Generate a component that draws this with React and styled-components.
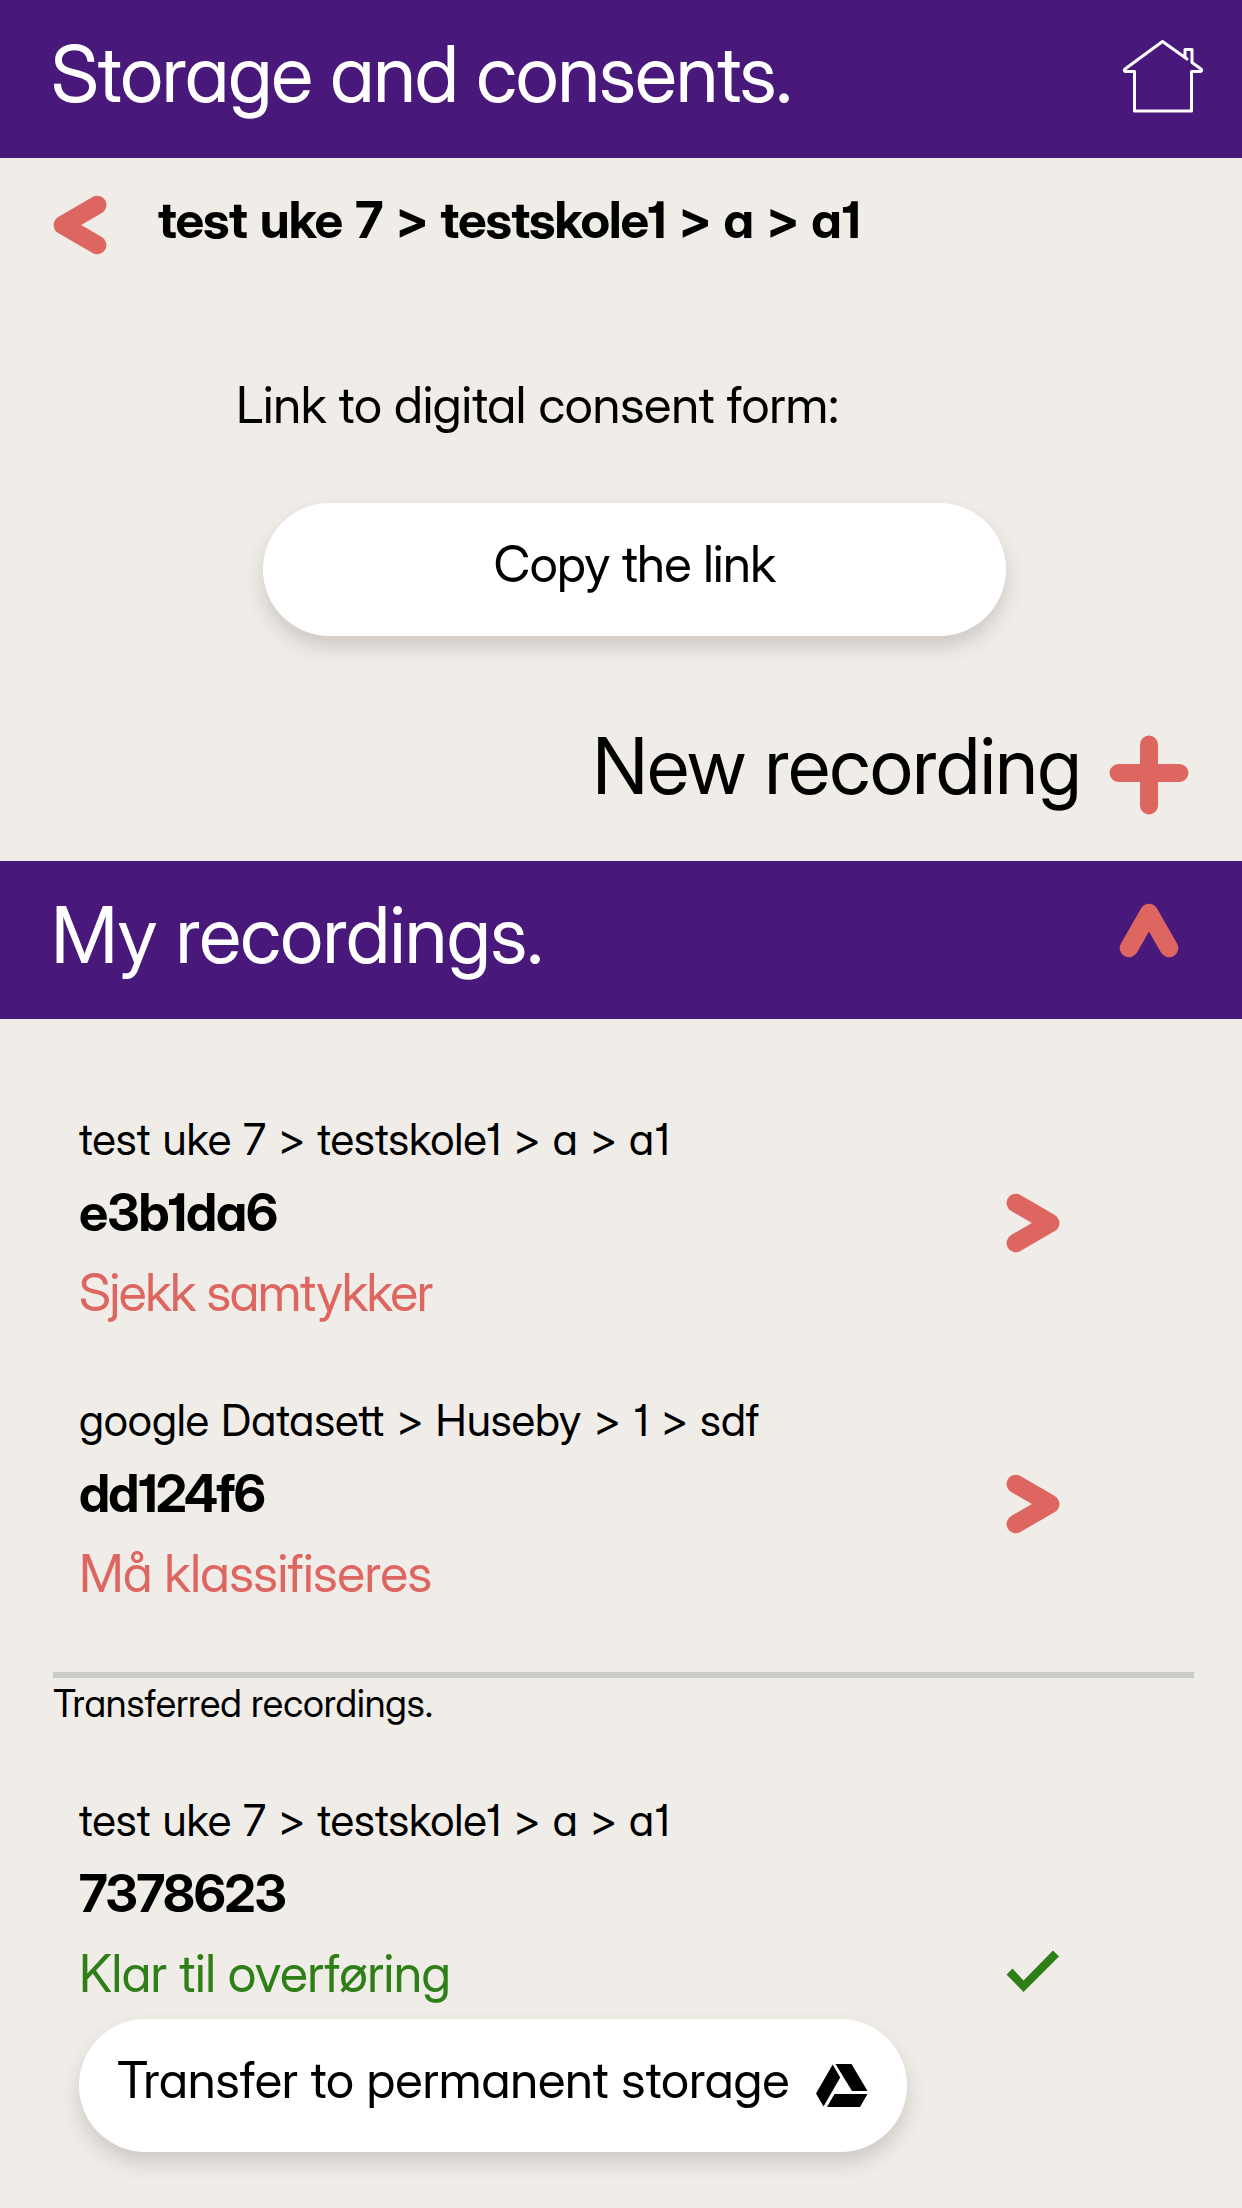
import React from 'react';
import styled, { createGlobalStyle } from 'styled-components';

const purple = '#48197a';
const coral = '#de6661';
const green = '#2f7f18';

const GlobalStyle = createGlobalStyle`
  body {
    margin: 0;
    background: #f0ede8;
    color: #000;
    font-family: "Inter Display", Inter, sans-serif;
    font-feature-settings: "cv11", "cv01", "calt" 0;
    font-weight: 400;
  }
`;

const Page = styled.div`
  box-sizing: border-box;
  width: 1242px;
  min-height: 2208px;
  overflow: hidden;
`;

const Bar = styled.header`
  box-sizing: border-box;
  display: flex;
  justify-content: space-between;
  align-items: flex-start;
  height: 158px;
  padding: 0 ${(p) => p.$right}px 0 51px;
  background: ${purple};
  color: #fff;
`;

const BarTitle = styled.h1`
  margin: 0;
  font-size: 78px;
  font-weight: 400;
  line-height: 147px;
  letter-spacing: ${(p) => p.$tracking}px;
  white-space: nowrap;
`;

const BarIcon = styled.div`
  display: flex;
  margin-top: ${(p) => p.$top}px;
`;

const CrumbRow = styled.nav`
  display: flex;
  align-items: center;
  gap: 51px;
  height: 133px;
  padding-left: 53px;
`;

const Crumb = styled.div`
  padding-bottom: 10px;
  font-size: 51px;
  font-weight: 700;
  line-height: 62px;
  letter-spacing: -1px;
  word-spacing: 3px;
  white-space: nowrap;
`;

const Consent = styled.section`
  padding: 83px 0 0 236px;
`;

const ConsentLabel = styled.div`
  font-size: 51px;
  line-height: 62px;
  letter-spacing: -0.29px;
`;

const Pill = styled.button`
  box-sizing: border-box;
  display: flex;
  align-items: center;
  justify-content: ${(p) => (p.$center ? 'center' : 'flex-start')};
  gap: 27px;
  width: ${(p) => p.$width}px;
  height: 133px;
  margin: ${(p) => p.$margin};
  padding: 0 ${(p) => (p.$center ? 0 : 38)}px;
  border: 0;
  border-radius: 67px;
  background: #fff;
  box-shadow: 0 11px 20px rgba(60, 40, 40, 0.18);
  color: #000;
  font: inherit;
  font-feature-settings: inherit;
  font-size: 51px;
  letter-spacing: ${(p) => p.$tracking}px;
`;

const PillLabel = styled.span`
  padding-bottom: 11px;
  line-height: 62px;
  white-space: nowrap;
`;

const NewRecording = styled.div`
  display: flex;
  justify-content: flex-end;
  align-items: flex-start;
  gap: 28px;
  height: 142px;
  margin-top: 83px;
  padding-right: 53px;
`;

const NewLabel = styled.span`
  font-size: 78px;
  line-height: 94px;
  letter-spacing: -0.5px;
`;

const PlusSlot = styled.span`
  display: flex;
  padding-top: 16px;
`;

const List = styled.main`
  padding: 85px 0 0 79px;
`;

const Recording = styled.article`
  display: flex;
  width: 981px;
  justify-content: space-between;
  align-items: flex-start;
  margin-bottom: ${(p) => p.$gap}px;
`;

const Path = styled.div`
  font-size: 44px;
  line-height: 70px;
  letter-spacing: -0.1px;
  word-spacing: 1.1px;
  white-space: nowrap;
`;

const Ident = styled.div`
  font-size: 52px;
  font-weight: 700;
  line-height: 78px;
  letter-spacing: ${(p) => p.$tracking}px;
`;

const Status = styled.div`
  font-size: 52px;
  line-height: 81px;
  letter-spacing: ${(p) => p.$tracking}px;
  color: ${(p) => p.$color};
`;

const RowIcon = styled.div`
  display: flex;
  margin-top: ${(p) => p.$top}px;
`;

const Transferred = styled.h2`
  width: 1141px;
  margin: 0 0 57px -26px;
  border-top: 6px solid #cbcbca;
  font-size: 38px;
  font-weight: 400;
  line-height: 50px;
  letter-spacing: -0.08px;
`;

const HomeIcon = () => (
  <svg width="82" height="75" viewBox="0 0 82 75" fill="none" stroke="#fff" strokeWidth="3" strokeLinejoin="round" strokeLinecap="round">
    <path d="M12.500 32.500H3.200Q1.500 31.500 3 30L40.500 2.500L63 18.500V10.500H70V23.500L79 30Q80.500 31.500 78.500 32.500H69.500V72H12.500Z" />
    <path d="M63 18.500L65 20" />
  </svg>
);

const SideChevron = ({ left }) => (
  <svg width="54" height="60" viewBox="0 0 54 60" fill="none" stroke={coral} strokeWidth="18.500" strokeLinecap="round" strokeLinejoin="round">
    <path d={left ? 'M44.200 10L9.800 30L44.200 50' : 'M9.800 10L44.200 30L9.800 50'} />
  </svg>
);

const UpChevron = () => (
  <svg width="60" height="55" viewBox="0 0 60 55" fill="none" stroke={coral} strokeWidth="18.500" strokeLinecap="round" strokeLinejoin="round">
    <path d="M10 45L30 10L50 45" />
  </svg>
);

const PlusIcon = () => (
  <svg width="80" height="80" viewBox="0 0 80 80" stroke={coral} strokeWidth="18" strokeLinecap="round">
    <path d="M9.500 38H70.500M40 9.500V70.500" />
  </svg>
);

const CheckIcon = () => (
  <svg width="54" height="42" viewBox="0 0 54 42" fill={green}>
    <path d="M17.500 30.500L47 0.500L53 6.500L17.500 42L0.500 24.500L6.500 18.500Z" />
  </svg>
);

const DriveIcon = () => (
  <svg width="52" height="43" viewBox="0 0 52 43" fill="#000">
    <path d="M16.700 0.500L24.200 13.500L7.500 42.500L0 29.500Z" />
    <path d="M19.500 0H35.500L51.500 27H36Z" />
    <path d="M18.500 30H51.500L44 43H11Z" />
  </svg>
);

const RecordingRow = ({ path, id, status, color, icon, iconTop, idTracking, statusTracking, gap }) => (
  <Recording $gap={gap}>
    <div>
      <Path>{path}</Path>
      <Ident $tracking={idTracking}>{id}</Ident>
      <Status $color={color} $tracking={statusTracking}>{status}</Status>
    </div>
    <RowIcon $top={iconTop}>{icon}</RowIcon>
  </Recording>
);

export default function App() {
  return (
    <Page>
      <GlobalStyle />
      <Bar $right={38}>
        <BarTitle $tracking={-1.12}>Storage and consents.</BarTitle>
        <BarIcon $top={39}><HomeIcon /></BarIcon>
      </Bar>
      <CrumbRow>
        <SideChevron left />
        <Crumb>{'test uke 7 > testskole1 > a > a1'}</Crumb>
      </CrumbRow>
      <Consent>
        <ConsentLabel>Link to digital consent form:</ConsentLabel>
        <Pill $center $width={743} $margin="67px 0 0 27px" $tracking={-0.64}>
          <PillLabel>Copy the link</PillLabel>
        </Pill>
      </Consent>
      <NewRecording>
        <NewLabel>New recording</NewLabel>
        <PlusSlot><PlusIcon /></PlusSlot>
      </NewRecording>
      <Bar $right={63}>
        <BarTitle $tracking={-0.72}>My recordings.</BarTitle>
        <BarIcon $top={42}><UpChevron /></BarIcon>
      </Bar>
      <List>
        <RecordingRow
          path="test uke 7 > testskole1 > a > a1"
          id="e3b1da6"
          idTracking={-1.02}
          status="Sjekk samtykker"
          statusTracking={-1.45}
          color={coral}
          icon={<SideChevron />}
          iconTop={89}
          gap={52}
        />
        <RecordingRow
          path="google Datasett > Huseby > 1 > sdf"
          id="dd124f6"
          idTracking={-1.9}
          status="Må klassifiseres"
          statusTracking={-0.57}
          color={coral}
          icon={<SideChevron />}
          iconTop={89}
          gap={58}
        />
        <Transferred>Transferred recordings.</Transferred>
        <RecordingRow
          path="test uke 7 > testskole1 > a > a1"
          id="7378623"
          idTracking={-1.25}
          status="Klar til overføring"
          statusTracking={-0.52}
          color={green}
          icon={<CheckIcon />}
          iconTop={165}
          gap={5}
        />
        <Pill $width={828} $margin="0" $tracking={-0.13}>
          <PillLabel>Transfer to permanent storage</PillLabel>
          <DriveIcon />
        </Pill>
      </List>
    </Page>
  );
}
